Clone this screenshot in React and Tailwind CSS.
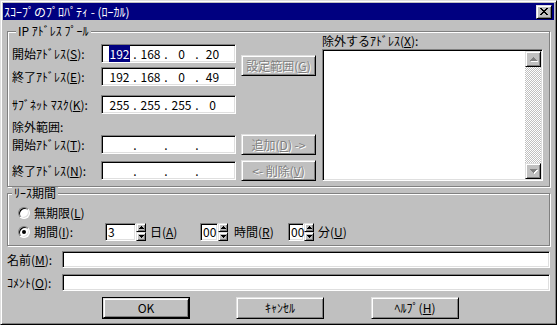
import React, { Fragment } from "react";

// Win95 style bevels
const sunken =
  "bg-white border border-t-[#808080] border-l-[#808080] border-r-white border-b-white shadow-[inset_1px_1px_0_#000,inset_-1px_-1px_0_#dfdfdf]";
const raised =
  "bg-[#c0c0c0] border border-t-[#dfdfdf] border-l-[#dfdfdf] border-r-black border-b-black shadow-[inset_1px_1px_0_#fff,inset_-1px_-1px_0_#808080]";
const group =
  "border border-[#808080] shadow-[inset_1px_1px_0_#fff,1px_1px_0_#fff]";
const disabledText = "text-[#808080] [text-shadow:1px_1px_0_#fff]";

const Acc = ({ children }) => <u className="underline underline-offset-[1px]">{children}</u>;

const IpField = ({ parts, selected }) => (
  <div className={`${sunken} w-[135px] h-[19px] flex items-center pl-[5px]`}>
    {parts.map((p, i) => (
      <Fragment key={i}>
        <span className="w-[25px] text-center leading-[13px]">
          {i === 0 && selected ? (
            <span className="bg-[#000080] text-white px-[1px]">{p}</span>
          ) : (
            p
          )}
        </span>
        {i < 3 && <span className="w-[6px] text-center">.</span>}
      </Fragment>
    ))}
  </div>
);

const Row = ({ label, children, className = "" }) => (
  <div className={`flex items-center h-[19px] ${className}`}>
    <span className="w-[89px] whitespace-nowrap">{label}</span>
    {children}
  </div>
);

const Btn = ({ children, disabled, className = "" }) => (
  <div
    className={`${raised} flex items-center justify-center whitespace-nowrap ${
      disabled ? disabledText : "text-black"
    } ${className}`}
  >
    {children}
  </div>
);

const Tri = ({ down, w = 7, color = "#000" }) => {
  const rows = Math.ceil(w / 2);
  return (
    <svg width={w} height={rows} shapeRendering="crispEdges">
      {Array.from({ length: rows }).map((_, i) => {
        const r = down ? rows - 1 - i : i;
        return <rect key={i} x={rows - 1 - r} y={i} width={r * 2 + 1} height="1" fill={color} />;
      })}
    </svg>
  );
};

const ScrollArrow = ({ down }) => (
  <div className={`${raised} w-[16px] h-[16px] flex items-center justify-center`}>
    <div className="relative">
      <div className="absolute left-[1px] top-[1px]">
        <Tri down={down} color="#fff" />
      </div>
      <div className="relative">
        <Tri down={down} color="#808080" />
      </div>
    </div>
  </div>
);

const Spin = ({ value, width }) => (
  <div className="flex h-[18px]">
    <div className={`${sunken} h-full flex items-center pl-[2px] leading-[12px]`} style={{ width }}>
      {value}
    </div>
    <div className="flex flex-col w-[10px] h-full">
      <div className={`${raised} flex-1 flex items-center justify-center`}>
        <Tri w={5} />
      </div>
      <div className={`${raised} flex-1 flex items-center justify-center`}>
        <Tri w={5} down />
      </div>
    </div>
  </div>
);

const Radio = ({ checked }) => (
  <div className="w-[12px] h-[12px] rounded-full bg-white border border-t-[#808080] border-l-[#808080] border-r-white border-b-white shadow-[inset_1px_1px_0_#000,inset_-1px_-1px_0_#dfdfdf] flex items-center justify-center">
    {checked && <div className="w-[4px] h-[4px] rounded-full bg-black" />}
  </div>
);

const CloseGlyph = () => {
  const px = [
    [0, 0], [1, 0], [6, 0], [7, 0],
    [1, 1], [2, 1], [5, 1], [6, 1],
    [2, 2], [3, 2], [4, 2], [5, 2],
    [3, 3], [4, 3],
    [2, 4], [3, 4], [4, 4], [5, 4],
    [1, 5], [2, 5], [5, 5], [6, 5],
    [0, 6], [1, 6], [6, 6], [7, 6],
  ];
  return (
    <svg width="8" height="7" shapeRendering="crispEdges">
      {px.map(([x, y], i) => (
        <rect key={i} x={x} y={y} width="1" height="1" fill="#000" />
      ))}
    </svg>
  );
};

export default function App() {
  return (
    <div className="w-[557px] h-[325px] overflow-hidden bg-[#c0c0c0] text-black text-[12px] leading-[14px] font-['Noto_Sans_CJK_JP','Noto_Sans_CJK_SC',sans-serif] border border-t-[#dfdfdf] border-l-[#dfdfdf] border-r-black border-b-black shadow-[inset_1px_1px_0_#fff,inset_-1px_-1px_0_#808080] p-[2px]">
      {/* title bar */}
      <div className="h-[17px] bg-[#000080] flex items-center justify-between pl-[1px] pr-[2px]">
        <span className="text-white whitespace-nowrap">ｽｺｰﾌﾟのﾌﾟﾛﾊﾟﾃｨ - (ﾛｰｶﾙ)</span>
        <div className={`${raised} w-[16px] h-[14px] flex items-center justify-center`}>
          <CloseGlyph />
        </div>
      </div>

      <div className="px-[4px]">
        {/* IP address pool */}
        <fieldset className={`${group} mt-[5px] flex pl-[4px] pr-[6px] pb-[5px]`}>
          <legend className="ml-[4px] px-[2px] bg-[#c0c0c0] leading-[12px]">IP ｱﾄﾞﾚｽ ﾌﾟｰﾙ</legend>
          <div className="flex w-full">
            <div className="flex flex-col w-[224px]">
              <Row label={<>開始ｱﾄﾞﾚｽ(<Acc>S</Acc>):</>} className="mt-[7px]">
                <IpField parts={["192", "168", "0", "20"]} selected />
              </Row>
              <Row label={<>終了ｱﾄﾞﾚｽ(<Acc>E</Acc>):</>} className="mt-[4px]">
                <IpField parts={["192", "168", "0", "49"]} />
              </Row>
              <Row label={<>ｻﾌﾞﾈｯﾄ ﾏｽｸ(<Acc>K</Acc>):</>} className="mt-[9px]">
                <IpField parts={["255", "255", "255", "0"]} />
              </Row>
              <div className="mt-[6px] h-[14px]">除外範囲:</div>
              <Row label={<>開始ｱﾄﾞﾚｽ(<Acc>T</Acc>):</>} className="mt-[1px]">
                <IpField parts={["", "", "", ""]} />
              </Row>
              <Row label={<>終了ｱﾄﾞﾚｽ(<Acc>N</Acc>):</>} className="mt-[7px]">
                <IpField parts={["", "", "", ""]} />
              </Row>
            </div>

            <div className="flex flex-col w-[75px] ml-[5px]">
              <Btn disabled className="h-[21px] mt-[18px]">
                設定範囲(<Acc>G</Acc>)
              </Btn>
              <Btn disabled className="h-[21px] mt-[58px]">
                追加(<Acc>D</Acc>) -&gt;
              </Btn>
              <Btn disabled className="h-[21px] mt-[5px]">
                &lt;- 削除(<Acc>V</Acc>)
              </Btn>
            </div>

            <div className="flex flex-col w-[221px] ml-[6px]">
              <div className="-mt-[3px] h-[14px] whitespace-nowrap">
                除外するｱﾄﾞﾚｽ(<Acc>X</Acc>):
              </div>
              <div className={`${sunken} mt-[1px] h-[132px] flex justify-end p-[1px]`}>
                <div className="flex flex-col w-[16px] h-full">
                  <ScrollArrow />
                  <div className="flex-1 [background:repeating-conic-gradient(#c0c0c0_0_25%,#ffffff_0_50%)_0_0/2px_2px]" />
                  <ScrollArrow down />
                </div>
              </div>
            </div>
          </div>
        </fieldset>

        {/* lease period */}
        <fieldset className={`${group} pb-[5px]`}>
          <legend className="ml-[4px] px-[2px] bg-[#c0c0c0] leading-[12px]">ﾘｰｽ期間</legend>
          <div className="flex items-center h-[14px] mt-[7px] pl-[10px]">
            <Radio />
            <span className="ml-[4px]">
              無期限(<Acc>L</Acc>)
            </span>
          </div>
          <div className="flex items-center h-[17px] mt-[3px]">
            <div className="flex items-center w-[97px] pl-[10px]">
              <Radio checked />
              <span className="ml-[4px]">
                期間(<Acc>I</Acc>):
              </span>
            </div>
            <Spin value="3" width={31} />
            <span className="w-[54px] pl-[4px] whitespace-nowrap">
              日(<Acc>A</Acc>)
            </span>
            <Spin value="00" width={18} />
            <span className="w-[60px] pl-[6px] whitespace-nowrap">
              時間(<Acc>R</Acc>)
            </span>
            <Spin value="00" width={16} />
            <span className="pl-[4px] whitespace-nowrap">
              分(<Acc>U</Acc>)
            </span>
          </div>
        </fieldset>

        {/* name / comment */}
        <div className="flex items-center mt-[5px]">
          <span className="w-[55px] whitespace-nowrap">
            名前(<Acc>M</Acc>):
          </span>
          <div className={`${sunken} w-[490px] h-[17px]`} />
        </div>
        <div className="flex items-center mt-[6px]">
          <span className="w-[55px] whitespace-nowrap">
            ｺﾒﾝﾄ(<Acc>O</Acc>):
          </span>
          <div className={`${sunken} w-[490px] h-[17px]`} />
        </div>

        {/* dialog buttons */}
        <div className="flex mt-[6px]">
          <div className="ml-[95px] w-[88px] h-[22px] border border-black">
            <Btn className="w-full h-full">OK</Btn>
          </div>
          <Btn className="ml-[46px] w-[88px] h-[22px]">ｷｬﾝｾﾙ</Btn>
          <Btn className="ml-[47px] w-[88px] h-[22px]">
            ﾍﾙﾌﾟ(<Acc>H</Acc>)
          </Btn>
        </div>
      </div>
    </div>
  );
}
